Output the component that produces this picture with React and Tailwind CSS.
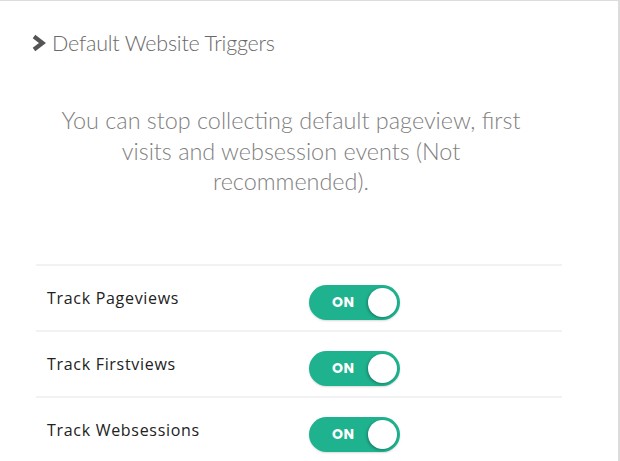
import React, { useState } from 'react';

const triggers = [
  { id: 'pageviews', label: 'Track Pageviews' },
  { id: 'firstviews', label: 'Track Firstviews' },
  { id: 'websessions', label: 'Track Websessions' },
];

const Toggle = ({ on, onChange }) => (
  <button
    onClick={onChange}
    className={`relative flex items-center w-[91px] h-[35px] rounded-full shadow-[0_1px_2px_rgba(0,0,0,0.15)] ${
      on ? 'bg-[#1fb28f]' : 'bg-[#c9c9c9]'
    }`}
  >
    <span className="absolute left-[23px] text-[14px] font-bold text-white tracking-[0.5px] font-['Poppins','Open_Sans',sans-serif]">
      {on ? 'ON' : 'OFF'}
    </span>
    <span
      className={`absolute top-[3px] w-[29px] h-[29px] rounded-full bg-white shadow-[-1px_1px_3px_rgba(0,0,0,0.3)] ${
        on ? 'left-[59px]' : 'left-[3px]'
      }`}
    />
  </button>
);

export default function App() {
  const [estado, setEstado] = useState({ pageviews: true, firstviews: true, websessions: true });

  return (
    <div className="w-[620px] h-[461px] bg-white border-t border-r-2 border-[#dcdcdc] overflow-hidden">
      {/* Cabecera */}
      <div className="flex items-center pl-[31px] pt-[26px]">
        <svg width="16" height="18" viewBox="0 0 16 18" className="mr-[5px]">
          <path d="M3 2.5 L11.5 9 L3 15.5" fill="none" stroke="#555" strokeWidth="4.2" strokeLinejoin="miter" />
        </svg>
        <h2 className="font-['Lato',sans-serif] font-light text-[21.5px] tracking-[-0.2px] text-[#6a6a6a]">Default Website Triggers</h2>
      </div>

      <p className="ml-[41px] mt-[46px] w-[500px] text-center font-['Lato',sans-serif] font-light text-[23.4px] leading-[30.5px] text-[#7f7f7f]">
        You can stop collecting default pageview, first visits and websession events (Not recommended).
      </p>

      {/* Lista de triggers */}
      <div className="ml-[36px] mt-[67px] w-[526px]">
        {triggers.map(t => (
          <div key={t.id} className="flex items-start h-[66px] border-t-2 border-[#f2f2f2]">
            <span className="w-[273px] shrink-0 pl-[11px] pt-[20px] text-[16px] tracking-[0.7px] text-[#222] font-['Open_Sans',sans-serif]">
              {t.label}
            </span>
            <div className="pt-[19px]">
              <Toggle on={estado[t.id]} onChange={() => setEstado({ ...estado, [t.id]: !estado[t.id] })} />
            </div>
          </div>
        ))}
      </div>
    </div>
  );
}
